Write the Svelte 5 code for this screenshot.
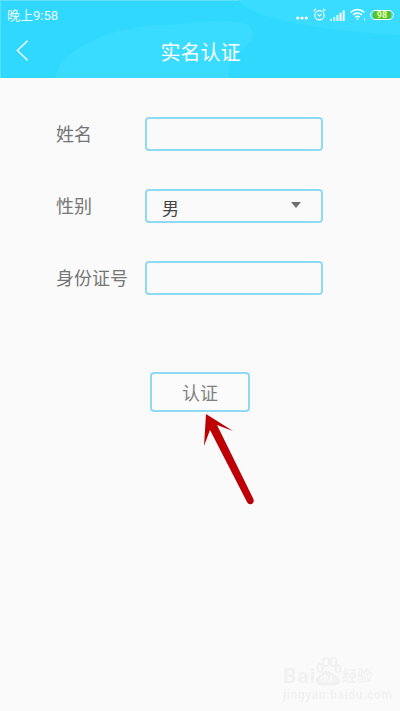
<script lang="ts">
  const fields = [
    { label: "姓名", value: "", select: false },
    { label: "性别", value: "男", select: true },
    { label: "身份证号", value: "", select: false },
  ];
</script>

<div class="page">
  <header class="top">
    <svg class="waves" width="400" height="78" viewBox="0 0 400 78">
      <path d="M55 78 C 65 42, 120 26, 165 25 C 205 22, 256 14, 253 35 C 250 50, 224 55, 229 78 Z" fill="#39dbff" />
      <path d="M238 0 C 250 16, 300 29, 400 35 L400 0 Z" fill="#39dbff" />
    </svg>
    <div class="status">
      <span class="time">晚上9:58</span>
      <div class="status-icons">
        <svg width="12" height="4" viewBox="0 0 12 4" class="dots">
          <circle cx="1.7" cy="2" r="1.6" fill="#fff" />
          <circle cx="6" cy="2" r="1.6" fill="#fff" />
          <circle cx="10.3" cy="2" r="1.6" fill="#fff" />
        </svg>
        <svg width="13" height="13" viewBox="0 0 14 14" fill="none" stroke="#fff" class="alarm">
          <circle cx="7" cy="7.8" r="5" stroke-width="1.2" />
          <path d="M4.8 6.6 L7 8.8 L9.2 6.6" stroke-width="1.1" />
          <path d="M0.8 3.2 L3.2 1 M13.2 3.2 L10.8 1" stroke-width="1.3" />
        </svg>
        <svg width="15" height="11" viewBox="0 0 16 12" fill="#fff" class="signal">
          <rect x="0" y="9.5" width="2" height="2.5" opacity="0.7" />
          <rect x="3.4" y="7.6" width="2.2" height="4.4" opacity="0.75" />
          <rect x="6.8" y="5.4" width="2.2" height="6.6" opacity="0.85" />
          <rect x="10.2" y="3" width="2.2" height="9" />
          <rect x="13.6" y="0.4" width="2.2" height="11.6" />
        </svg>
        <svg width="16" height="13" viewBox="0 0 16 13" fill="none" stroke="#fff" stroke-width="1.5" class="wifi">
          <path d="M0.6 4.4 Q7.5 -1.2 14.4 4.4" />
          <path d="M3 6.9 Q7.5 3.2 12 6.9" />
          <path d="M5.2 9.2 Q7.5 7.3 9.8 9.2" />
          <circle cx="7.5" cy="11" r="0.9" fill="#fff" stroke="none" />
          <rect x="14" y="10.4" width="1" height="2.2" fill="#fff" stroke="none" />
        </svg>
        <span class="battery"><span class="level">98</span></span>
      </div>
    </div>
    <div class="nav">
      <svg class="back" width="13" height="21" viewBox="0 0 13 21" fill="none" stroke="#fff" stroke-width="1.4">
        <path d="M11.5 0.8 L1.4 10.5 L11.5 20.2" />
      </svg>
      <h1>实名认证</h1>
    </div>
  </header>

  <main class="form">
    {#each fields as f}
      <div class="row">
        <span class="label">{f.label}</span>
        <div class="box" class:select={f.select}>
          {#if f.select}
            <span class="value">{f.value}</span>
            <span class="caret"></span>
          {/if}
        </div>
      </div>
    {/each}
    <button class="submit">认证</button>
  </main>

  <svg class="arrow" width="60" height="100" viewBox="0 0 60 100">
    <path d="M5 4 L32 21 L16 15 L52.4 89 Q53.6 92.6 50.6 94 Q47.6 95 46 92 L9 20 L3 36 Z" fill="#bd0006" />
  </svg>

  <div class="mark">
    <div class="mark-top">
      <span class="bai">Bai</span>
      <svg class="paw" width="26" height="29" viewBox="0 0 26 29" fill="none" stroke="#f0f0f0" stroke-width="1.8">
        <ellipse cx="5" cy="11" rx="2.6" ry="4" />
        <ellipse cx="11" cy="5" rx="3" ry="4.2" />
        <ellipse cx="18.5" cy="5" rx="3" ry="4.2" />
        <ellipse cx="23" cy="12" rx="2.4" ry="3.6" />
        <path d="M2 25 Q1.5 20 7 18 Q12 12 17 17 Q24.5 20 24 25 Q22 28.5 13 27.5 Q4 28.5 2 25 Z" fill="#f2f2f2" />
      </svg>
      <span class="du">du</span>
      <span class="jy">经验</span>
    </div>
    <div class="url">jingyan.baidu.com</div>
  </div>
</div>

<style>
  :global(body) {
    margin: 0;
    font-family: "Roboto", "Noto Sans CJK SC", sans-serif;
  }

  .page {
    position: relative;
    width: 400px;
    height: 711px;
    overflow: hidden;
    background: #fafafa;
    font-family: "Roboto", "Noto Sans CJK SC", sans-serif;
  }

  .top {
    position: relative;
    height: 78px;
    box-sizing: border-box;
    color: #fff;
    background: #31d8fe;
    border-top: 1px solid #5fe2ff;
    border-left: 1px solid #55e0ff;
  }

  .waves {
    position: absolute;
    left: -1px;
    top: -1px;
  }

  .status {
    position: relative;
    height: 27px;
    display: flex;
    align-items: center;
    justify-content: space-between;
    padding: 0 6px 0 6px;
  }

  .time {
    font-size: 13px;
    color: #e8fbff;
  }

  .status-icons {
    display: flex;
    align-items: center;
  }

  .dots {
    margin-right: 5px;
    margin-top: 6px;
  }

  .alarm {
    margin-right: 4px;
  }

  .signal {
    margin-right: 5px;
    margin-top: 1px;
  }

  .wifi {
    margin-right: 4px;
  }

  .battery {
    box-sizing: border-box;
    width: 24px;
    height: 10px;
    border: 1px solid #fff;
    border-radius: 5px;
    display: flex;
    margin-top: 1px;
  }

  .level {
    flex: 1;
    margin: 0 2px;
    background: #56c41f;
    border-radius: 3px;
    font-size: 9px;
    font-weight: 700;
    line-height: 8px;
    text-align: center;
    color: #e6ffc4;
  }

  .nav {
    height: 50px;
    position: relative;
    display: flex;
    align-items: center;
    justify-content: center;
  }

  .back {
    position: absolute;
    left: 15px;
    top: 12px;
  }

  h1 {
    margin: 0 0 3px;
    font-size: 20px;
    font-weight: 400;
  }

  .form {
    display: flex;
    flex-direction: column;
    padding: 39px 0 0 56px;
  }

  .row {
    display: flex;
    align-items: center;
    height: 34px;
    margin-bottom: 38px;
  }

  .label {
    width: 89px;
    flex: none;
    font-size: 18px;
    color: #757575;
    margin-top: -3px;
  }

  .box {
    box-sizing: border-box;
    width: 178px;
    height: 34px;
    border: 2px solid #8fd9f3;
    border-radius: 4px;
    display: flex;
    align-items: center;
    justify-content: space-between;
    padding: 0 20px 0 15px;
  }

  .value {
    font-size: 17px;
    color: #444;
    padding-top: 2px;
  }

  .caret {
    width: 0;
    height: 0;
    border-left: 5.5px solid transparent;
    border-right: 5.5px solid transparent;
    border-top: 6px solid #6e6e6e;
    margin-bottom: 3px;
  }

  .submit {
    box-sizing: border-box;
    align-self: flex-start;
    margin: 39px 0 0 94px;
    width: 100px;
    height: 40px;
    background: #fbfbfb;
    border: 2px solid #8fd9f3;
    border-radius: 4px;
    font-family: inherit;
    font-size: 18px;
    color: #808080;
    padding: 0;
  }

  .arrow {
    position: absolute;
    left: 201px;
    top: 410px;
  }

  .mark {
    position: absolute;
    left: 283px;
    top: 656px;
    color: #f1f1f1;
    filter: blur(0.5px);
  }

  .mark-top {
    display: flex;
    align-items: flex-end;
    height: 30px;
  }

  .bai {
    font-size: 21px;
    font-weight: 700;
    line-height: 20px;
    width: 32px;
    letter-spacing: 1px;
  }

  .paw {
    flex: none;
  }

  .du {
    position: absolute;
    left: 37px;
    top: 17px;
    font-size: 11px;
    font-weight: 700;
    line-height: 12px;
    color: #fafafa;
  }

  .jy {
    font-size: 15px;
    line-height: 20px;
    width: 32px;
    margin-left: 1px;
    font-weight: 700;
  }

  .url {
    font-size: 12px;
    font-weight: 700;
    margin-top: 2px;
    letter-spacing: 0.6px;
    white-space: nowrap;
  }
</style>
